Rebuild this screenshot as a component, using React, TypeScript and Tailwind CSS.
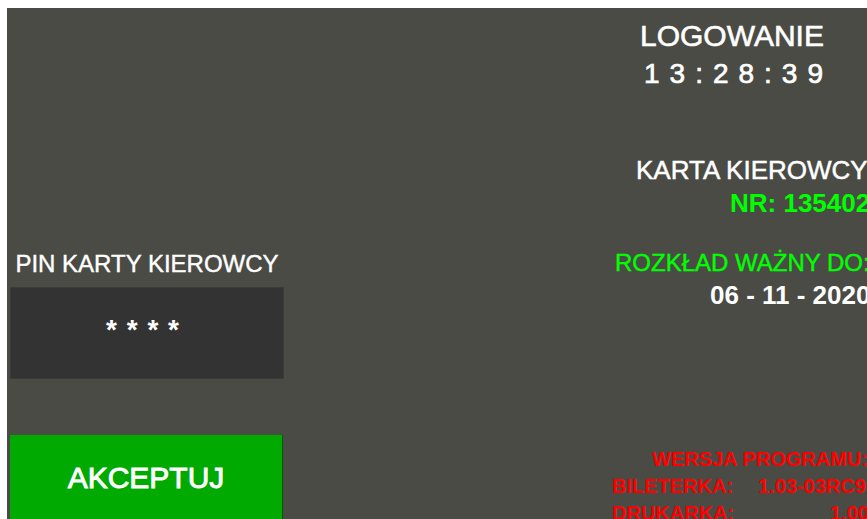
import React from "react";

const font = { fontFamily: '"Liberation Sans", Arial, sans-serif' };

export default function App() {
  return (
    <div className="w-[867px] h-[519px] overflow-hidden bg-white pt-[8px] pl-[7px]" style={font}>
      <div className="flex h-[511px] w-[900px] bg-[#4a4b45]">
        {/* left column: PIN entry and confirm button */}
        <div className="flex w-[280px] shrink-0 flex-col pl-[3px]">
          <div className="mt-[242px] w-[274px] shrink-0 whitespace-nowrap text-center text-[24px] leading-[28px] text-white [-webkit-text-stroke:0.4px_currentColor]">
            PIN KARTY KIEROWCY
          </div>
          <div className="mt-[9px] flex h-[92px] w-[274px] shrink-0 items-center justify-center border border-[#3b3b3a] bg-[#333333] pb-[6px] pr-[8px]">
            <span className="text-[28px] font-bold leading-[30px] tracking-[1px] text-white">* * * *</span>
          </div>
          <div className="mt-[56px] h-[92px] w-[273px] shrink-0 border-r border-[#006000] bg-[#00aa00] pt-[28px] text-center text-[30px] leading-[30px] text-white [-webkit-text-stroke:0.9px_currentColor]">
            AKCEPTUJ
          </div>
        </div>

        {/* right column: session info */}
        <div className="flex flex-1 flex-col whitespace-nowrap">
          <div className="mt-[13px] shrink-0 pl-[353px] text-[30px] leading-[30px] text-white [-webkit-text-stroke:0.6px_currentColor]">LOGOWANIE</div>
          <div className="mt-[8px] shrink-0 pl-[357px] text-[28px] leading-[30px] tracking-[10px] text-white [-webkit-text-stroke:0.7px_currentColor]">13:28:39</div>

          <div className="mt-[66px] shrink-0 pl-[349px] text-[26px] leading-[30px] text-white [-webkit-text-stroke:0.5px_currentColor]">KARTA KIEROWCY</div>
          <div className="mt-[3px] shrink-0 pl-[443px] text-[26px] font-bold leading-[30px] text-[#00ff00]">NR: 135402</div>

          <div className="mt-[30px] shrink-0 pl-[328px] text-[24px] leading-[30px] text-[#00ff00] [-webkit-text-stroke:0.4px_currentColor]">ROZKŁAD WAŻNY DO:</div>
          <div className="mt-[2px] shrink-0 pl-[423px] text-[26px] font-bold leading-[30px] text-white">06 - 11 - 2020</div>

          <div className="mt-[136px] shrink-0 pl-[365px] text-[20px] font-bold leading-[27px] text-[#ff0000]">WERSJA PROGRAMU:</div>
          <div className="flex shrink-0 pl-[325px] text-[20px] font-bold leading-[27px] text-[#ff0000]">
            <span className="w-[146px]">BILETERKA:</span>
            <span>1.03-03RC9</span>
          </div>
          <div className="flex shrink-0 pl-[325px] text-[20px] font-bold leading-[27px] text-[#ff0000]">
            <span className="w-[218px]">DRUKARKA:</span>
            <span>1.00</span>
          </div>
        </div>
      </div>
    </div>
  );
}
